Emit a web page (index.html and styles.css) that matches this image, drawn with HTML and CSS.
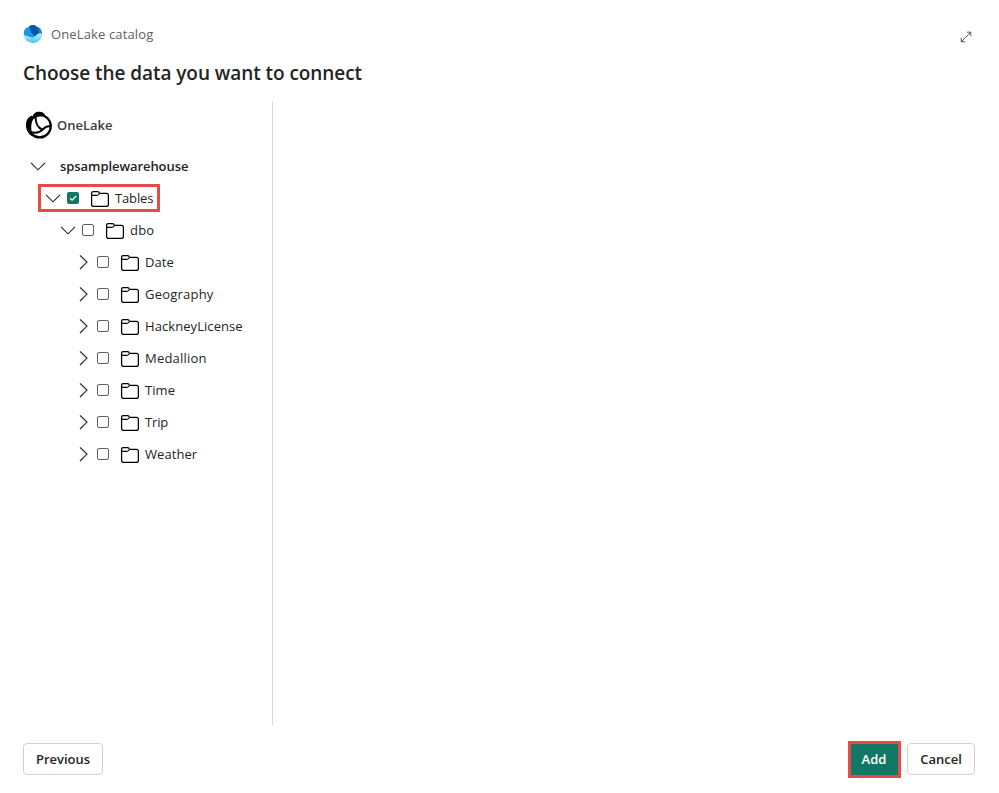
FILE: index.html
```html
<!DOCTYPE html>
<html lang="en">
<head>
<meta charset="utf-8">
<title>OneLake catalog</title>
<link rel="stylesheet" href="styles.css">
</head>
<body>
<svg width="0" height="0" class="defs">
  <symbol id="folder" viewBox="0 0 20 18"><path d="M1.6 3.2Q1.6 1.6 3.2 1.6H7.4Q9 1.6 9.5 3.4H16.2Q18.4 3.4 18.4 5.4V14.2Q18.4 16.4 16.2 16.4H3.8Q1.6 16.4 1.6 14.2Z" fill="none" stroke="#000" stroke-width="1.25"/><path d="M1.7 5.4H6.6Q8.8 5.4 9.5 3.4" fill="none" stroke="#000" stroke-width="1.1"/></symbol>
  <symbol id="down" viewBox="0 0 16 16"><path d="M1 4.9L8 11.8L15 4.9" fill="none" stroke="#242424" stroke-width="1.15"/></symbol>
  <symbol id="right" viewBox="0 0 16 16"><path d="M5 1.3L12 8.1L5 15" fill="none" stroke="#242424" stroke-width="1.15"/></symbol>
</svg>
<div class="dialog">
  <header class="header">
    <div class="brand">
      <svg class="brand-icon" viewBox="0 0 20 20"><defs><linearGradient id="top" x1="0" y1="0" x2="1" y2="1"><stop stop-color="#0b5cae"/><stop offset="1" stop-color="#1d8fe0"/></linearGradient><linearGradient id="water" x1="0" y1="0" x2="0" y2="1"><stop stop-color="#b5f3fc"/><stop offset="1" stop-color="#48c8f4"/></linearGradient></defs><path d="M5.5 3.2C6.5.7 11.8.3 13.5 2.5C17.5 3.4 19.5 7 19 11.2L10 14L1.2 11C.2 7.3 2 4.2 5.5 3.2Z" fill="url(#top)"/><path d="M5.5 3.2C2 4.2.2 7.3 1.2 11L9.8 14L12 12C8.8 9.5 7 6 7.2 2.2Z" fill="#1798e8"/><path d="M6.8 2.3C6.5 6 8.5 10 12 12L16 8.9C15.8 6 14.3 3.5 12 1.7C10 1 8 1.3 6.8 2.3Z" fill="#07569f"/><path d="M1 10.6C4.5 14.5 9.8 14.7 12.6 11.8C14.7 9.3 17.3 8.6 19 10C19 15.5 15 19 10 19C5 19 1 15.5 1 10.6Z" fill="url(#water)"/></svg>
      <span class="brand-name">OneLake catalog</span>
    </div>
    <svg class="expand" viewBox="0 0 14 14"><path d="M2.2 11.8L11.8 2.2M8 2.2H11.8V6M2.2 8V11.8H6" fill="none" stroke="#555" stroke-width="1"/></svg>
  </header>
  <h1 class="title">Choose the data you want to connect</h1>
  <main class="main">
    <nav class="sidebar">
      <div class="lake">
        <svg class="lake-icon" viewBox="0 0 28 28"><path d="M7 4.4C2.8 5.9.6 10 1 15.2C1.3 19.5 3.7 23.3 7 25L9 17.5Z"/><circle cx="14.6" cy="15.2" r="11.2" fill="#fff" stroke="#000" stroke-width="2.2"/><path d="M7.5 6.5C8 2.5 11 .6 14 .7C17.5.7 20 2.5 21 6.2C17 4.4 13 5 9.5 7.5Z"/><path d="M9 6C4 8 2 14 3.8 18.8L6.8 20C5.6 16 6.3 10 9.6 6.5Z"/><path d="M10.6 6C10.4 11.4 12.8 16.9 17.7 18.8M4.8 20.6C9.5 22.4 14.2 22 17.7 18.6C20.2 15.8 22.5 14.7 25.2 15.4" fill="none" stroke="#000" stroke-width="2"/></svg>
        <span class="semibold lake-name">OneLake</span>
      </div>
      <div class="row root"><svg class="chevron"><use href="#down"/></svg><span class="semibold warehouse">spsamplewarehouse</span></div>
      <div class="row tables"><svg class="chevron"><use href="#down"/></svg><span class="check checked"><svg viewBox="0 0 12 12"><path d="M3 6.2L5.1 8.2L9.2 4" fill="none" stroke="#fff" stroke-width="1.2"/></svg></span><svg class="folder"><use href="#folder"/></svg><span class="label tight">Tables</span></div>
      <div class="row schema"><svg class="chevron"><use href="#down"/></svg><span class="check"></span><svg class="folder"><use href="#folder"/></svg><span class="label wide">dbo</span></div>
      <div class="row leaf"><svg class="chevron"><use href="#right"/></svg><span class="check"></span><svg class="folder"><use href="#folder"/></svg><span class="label">Date</span></div>
      <div class="row leaf"><svg class="chevron"><use href="#right"/></svg><span class="check"></span><svg class="folder"><use href="#folder"/></svg><span class="label wide">Geography</span></div>
      <div class="row leaf"><svg class="chevron"><use href="#right"/></svg><span class="check"></span><svg class="folder"><use href="#folder"/></svg><span class="label">HackneyLicense</span></div>
      <div class="row leaf"><svg class="chevron"><use href="#right"/></svg><span class="check"></span><svg class="folder"><use href="#folder"/></svg><span class="label wide">Medallion</span></div>
      <div class="row leaf"><svg class="chevron"><use href="#right"/></svg><span class="check"></span><svg class="folder"><use href="#folder"/></svg><span class="label">Time</span></div>
      <div class="row leaf"><svg class="chevron"><use href="#right"/></svg><span class="check"></span><svg class="folder"><use href="#folder"/></svg><span class="label tight">Trip</span></div>
      <div class="row leaf"><svg class="chevron"><use href="#right"/></svg><span class="check"></span><svg class="folder"><use href="#folder"/></svg><span class="label">Weather</span></div>
    </nav>
    <section class="preview"></section>
  </main>
  <footer class="footer">
    <button class="button previous">Previous</button>
    <div class="actions"><button class="button add">Add</button><button class="button cancel">Cancel</button></div>
  </footer>
</div>
</body>
</html>
```
FILE: styles.css
```css
* { box-sizing: border-box; }
body { margin: 0; background: #fff; color: #242424; font: 13px/20px "Open Sans", "Noto Sans", sans-serif; }
.defs { position: absolute; }
svg { display: block; flex: none; }
.dialog { height: 793px; display: flex; flex-direction: column; }
.header { display: flex; justify-content: space-between; height: 58px; padding: 24px 26px 0 23px; }
.brand { display: flex; height: 20px; align-items: center; gap: 8px; }
.brand-icon { width: 20px; height: 20px; }
.brand-name { color: #616161; letter-spacing: 0.13px; }
.expand { width: 14px; height: 14px; margin-top: 6px; }
.title { margin: 0; padding-left: 23px; height: 43px; font-size: 19px; line-height: 30px; font-weight: 600; letter-spacing: -0.06px; }
.main { display: flex; height: 624px; }
.sidebar { width: 273px; border-right: 1px solid #d9d9d9; }
.preview { flex: 1; }
.lake { display: flex; align-items: center; height: 49px; padding: 0 0 2px 25px; gap: 4px; }
.lake-icon { width: 28px; height: 28px; }
.semibold { font-weight: 600; }
.lake-name { color: #3b3a39; }
.row { display: flex; align-items: center; height: 32px; white-space: nowrap; }
.root { padding-left: 30px; }
.warehouse { margin-left: 14px; letter-spacing: -0.06px; }
.tables { height: 28px; width: 122px; margin: 2px 0 2px 38px; border: 3px solid #e84a45; padding-left: 4px; }
.schema { padding-left: 60px; }
.leaf { padding-left: 75px; }
.label { letter-spacing: 0.07px; }
.label.wide { letter-spacing: 0.22px; }
.label.tight { letter-spacing: -0.15px; }
.chevron { width: 16px; height: 16px; }
.check { width: 12px; height: 12px; margin: 0 11px 0 6px; border: 1px solid #616161; border-radius: 2px; flex: none; }
.checked { border: 0; background: #117865; }
.folder { width: 20px; height: 18px; margin: 2px 5px 0 0; }
.footer { display: flex; justify-content: space-between; align-items: flex-start; padding: 16px 24px 0 23px; }
.actions { display: flex; gap: 6px; }
.button { height: 32px; margin-top: 2px; padding: 0; border: 1px solid #d1d1d1; border-radius: 4px; background: #fff; color: #242424; font: 600 13px/20px "Open Sans", "Noto Sans", sans-serif; }
.previous { width: 80px; }
.add { width: 53px; height: 37px; margin-top: 0; padding: 0 1px 2px 0; border: 3px solid #e84a45; border-radius: 0; background: #117865; color: #fff; }
.cancel { width: 68px; }
```
